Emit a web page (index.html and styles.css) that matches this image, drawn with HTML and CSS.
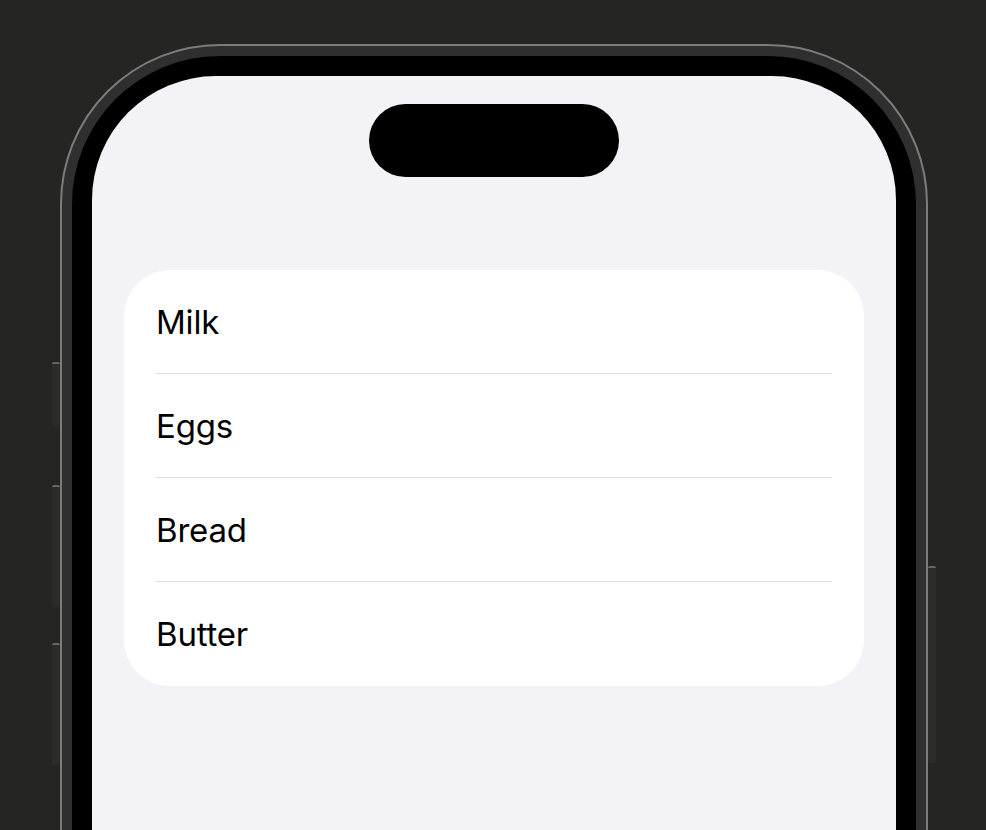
FILE: index.html
```html
<!DOCTYPE html>
<html lang="en">
<head>
    <meta charset="UTF-8">
    <meta name="viewport" content="width=device-width, initial-scale=1.0">
    <title>Grocery List</title>
    <link rel="stylesheet" href="styles.css">
</head>
<body>
    <div class="phone">
        <div class="side-button action"></div>
        <div class="side-button volume-up"></div>
        <div class="side-button volume-down"></div>
        <div class="side-button power"></div>

        <div class="bezel">
            <div class="screen">
                <div class="island"></div>

                <ul class="list">
                    <li class="row">Milk</li>
                    <li class="row">Eggs</li>
                    <li class="row">Bread</li>
                    <li class="row">Butter</li>
                </ul>
            </div>
        </div>
    </div>
</body>
</html>
```

FILE: styles.css
```css
html, body {
    height: 100%;
}

body {
    margin: 0;
    background: #252523;
    overflow: hidden;
    font-family: Inter, "Noto Sans", sans-serif;
}

.phone {
    position: relative;
    width: 868px;
    height: 1000px;
    margin: 44px 0 0 60px;
    padding: 10px;
    box-sizing: border-box;
    background: #2f2f2f;
    border: 2px solid #7c7c7c;
    border-radius: 160px;
}

.side-button {
    position: absolute;
    width: 8px;
    background: #2c2c2b;
    border-top: 2px solid #666;
    border-radius: 2px;
    box-sizing: border-box;
}

.action {
    left: -10px;
    top: 316px;
    height: 64px;
}

.volume-up {
    left: -10px;
    top: 439px;
    height: 122px;
}

.volume-down {
    left: -10px;
    top: 597px;
    height: 122px;
}

.power {
    right: -10px;
    top: 520px;
    height: 197px;
}

.bezel {
    height: 100%;
    padding: 20px;
    box-sizing: border-box;
    background: #000;
    border-radius: 148px;
}

.screen {
    height: 100%;
    padding: 28px 32px 0;
    box-sizing: border-box;
    background: #f2f2f7;
    border-radius: 124px;
    overflow: hidden;
}

.island {
    width: 250px;
    height: 73px;
    margin: 0 auto;
    background: #000;
    border-radius: 37px;
}

.list {
    list-style: none;
    margin: 93px 0 0;
    padding: 0 32px;
    background: #fff;
    border-radius: 46px;
}

.row {
    height: 104px;
    display: flex;
    align-items: center;
    font-size: 33px;
    letter-spacing: -0.2px;
    color: #000;
    border-bottom: 1px solid #dcdcde;
    box-sizing: border-box;
}

.row:last-child {
    border-bottom: none;
}
```
